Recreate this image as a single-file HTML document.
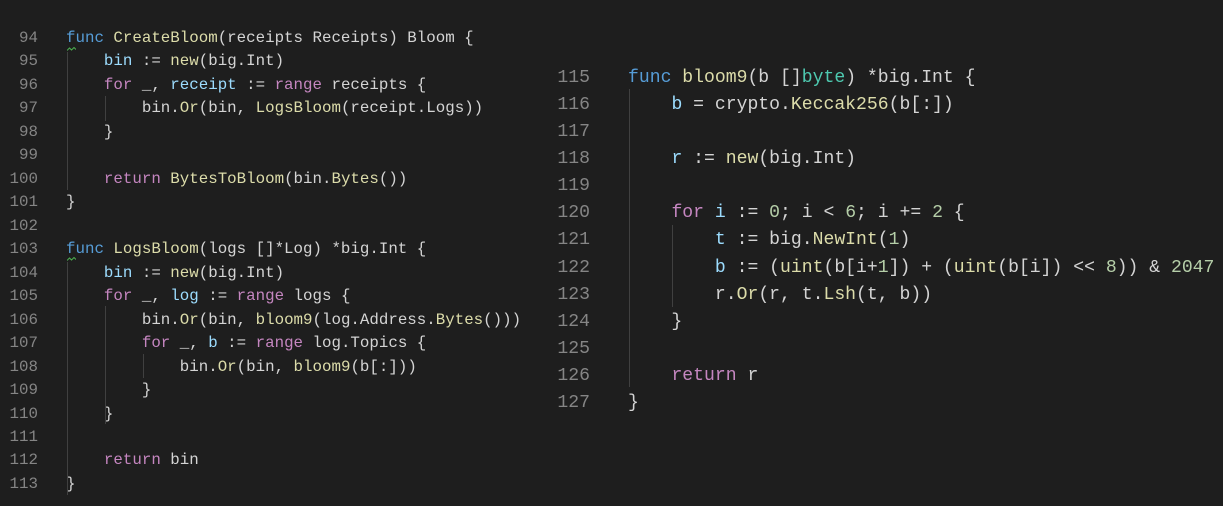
<!DOCTYPE html>
<html><head><meta charset="utf-8"><style>
body{margin:0;background:#1e1e1e;width:1223px;height:506px;overflow:hidden;position:relative}
pre{margin:0;position:absolute;font-family:"Liberation Mono",monospace;color:#d4d4d4;white-space:pre}
.n{color:#858585}
.k{color:#569cd6}.f{color:#dcdcaa}.c{color:#c586c0}.v{color:#9cdcfe}.t{color:#4ec9b0}.m{color:#b5cea8}
.g{position:absolute;width:1px;background:#404040}
.sq{position:absolute;width:9px;height:4px}
</style></head><body>
<pre class="n" style="left:0;top:27px;width:38px;text-align:right;font-size:15.8px;line-height:23.47px">94
95
96
97
98
99
100
101
102
103
104
105
106
107
108
109
110
111
112
113</pre>
<pre style="left:66px;top:27px;font-size:15.8px;line-height:23.47px"><span class="k">func</span> <span class="f">CreateBloom</span>(receipts Receipts) Bloom {
    <span class="v">bin</span> := <span class="f">new</span>(big.Int)
    <span class="c">for</span> _, <span class="v">receipt</span> := <span class="c">range</span> receipts {
        bin.<span class="f">Or</span>(bin, <span class="f">LogsBloom</span>(receipt.Logs))
    }

    <span class="c">return</span> <span class="f">BytesToBloom</span>(bin.<span class="f">Bytes</span>())
}

<span class="k">func</span> <span class="f">LogsBloom</span>(logs []*Log) *big.Int {
    <span class="v">bin</span> := <span class="f">new</span>(big.Int)
    <span class="c">for</span> _, <span class="v">log</span> := <span class="c">range</span> logs {
        bin.<span class="f">Or</span>(bin, <span class="f">bloom9</span>(log.Address.<span class="f">Bytes</span>()))
        <span class="c">for</span> _, <span class="v">b</span> := <span class="c">range</span> log.Topics {
            bin.<span class="f">Or</span>(bin, <span class="f">bloom9</span>(b[:]))
        }
    }

    <span class="c">return</span> bin
}</pre>
<div class="g" style="left:67px;top:52px;height:138px"></div>
<div class="g" style="left:105px;top:96px;height:25px"></div>
<div class="g" style="left:67px;top:262px;height:233px"></div>
<div class="g" style="left:105px;top:306px;height:118px"></div>
<div class="g" style="left:143px;top:354px;height:24px"></div>
<svg class="sq" style="left:67px;top:47px" viewBox="0 0 9 4"><path d="M0 3.5L2.5 1L4.5 3L7 0.5L9 2.5" fill="none" stroke="#4caf50" stroke-width="1"/></svg>
<svg class="sq" style="left:67px;top:257px" viewBox="0 0 9 4"><path d="M0 3.5L2.5 1L4.5 3L7 0.5L9 2.5" fill="none" stroke="#4caf50" stroke-width="1"/></svg>

<pre class="n" style="left:540px;top:65px;width:50px;text-align:right;font-size:18.1px;line-height:27.08px">115
116
117
118
119
120
121
122
123
124
125
126
127</pre>
<pre style="left:628px;top:65px;font-size:18.1px;line-height:27.08px"><span class="k">func</span> <span class="f">bloom9</span>(b []<span class="t">byte</span>) *big.Int {
    <span class="v">b</span> = crypto.<span class="f">Keccak256</span>(b[:])

    <span class="v">r</span> := <span class="f">new</span>(big.Int)

    <span class="c">for</span> <span class="v">i</span> := <span class="m">0</span>; i &lt; <span class="m">6</span>; i += <span class="m">2</span> {
        <span class="v">t</span> := big.<span class="f">NewInt</span>(<span class="m">1</span>)
        <span class="v">b</span> := (<span class="f">uint</span>(b[i+<span class="m">1</span>]) + (<span class="f">uint</span>(b[i]) &lt;&lt; <span class="m">8</span>)) &amp; <span class="m">2047</span>
        r.<span class="f">Or</span>(r, t.<span class="f">Lsh</span>(t, b))
    }

    <span class="c">return</span> r
}</pre>
<div class="g" style="left:629px;top:89px;height:298px"></div>
<div class="g" style="left:672px;top:225px;height:82px"></div>
</body></html>
